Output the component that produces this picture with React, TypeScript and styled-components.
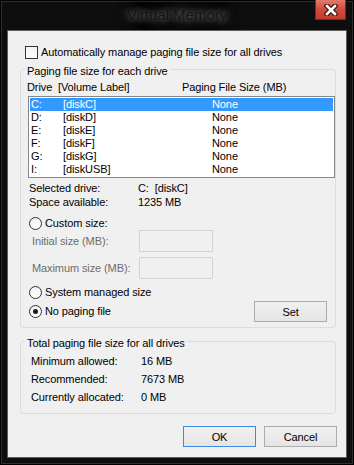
import * as React from 'react';
import styled, { createGlobalStyle } from 'styled-components';

const GlobalStyle = createGlobalStyle`
  html, body {
    margin: 0;
    padding: 0;
    background: #000;
  }
  * {
    box-sizing: border-box;
  }
`;

const FONT = `"Liberation Sans", Arial, sans-serif`;

const Window = styled.div`
  width: 354px;
  height: 465px;
  background: #0e0e0e;
  box-shadow: inset 0 0 0 1px #000, inset 0 0 0 2px #2e2e2e;
  display: flex;
  flex-direction: column;
  font-family: ${FONT};
  font-size: 11px;
  letter-spacing: -0.1px;
  color: #000;
  white-space: nowrap;
`;

const TitleBar = styled.div`
  height: 30px;
  display: grid;
  grid-template-columns: 1fr auto 1fr;
  align-items: start;
`;

const Title = styled.div`
  grid-column: 2;
  padding: 6px 4px 0;
  font-size: 15px;
  letter-spacing: 0;
  line-height: 18px;
  color: #141414;
  text-shadow: 0 0 4px #5a5a5a, 0 0 8px #4a4a4a, 0 0 12px #3a3a3a, 0 0 16px #2e2e2e;
`;

const CloseButton = styled.div`
  grid-column: 3;
  justify-self: end;
  margin-right: 8px;
  width: 31px;
  height: 20px;
  border: 1px solid #7a2a22;
  border-top: none;
  background: linear-gradient(#e07a6e, #cf4b3d 50%, #c43b2e);
  display: flex;
  align-items: center;
  justify-content: center;
`;

const Client = styled.div`
  flex: 1;
  margin: 0 7px 7px;
  border: 1px solid #5c5c5c;
  background: #f0f0f0;
  display: flex;
  flex-direction: column;
`;

const CheckRow = styled.div`
  margin: 15px 0 0 17px;
  height: 13px;
  display: flex;
  align-items: center;
  gap: 3px;
  line-height: 13px;
`;

const CheckBox = styled.span`
  width: 13px;
  height: 13px;
  border: 1px solid #333;
  background: linear-gradient(#f4f4f4, #fcfcfc);
`;

const Group = styled.div<{ $top: number; $bottom: number }>`
  margin: ${({ $top }) => $top}px 10px 0 12px;
  padding-bottom: ${({ $bottom }) => $bottom}px;
  border: 1px solid #dcdcdc;
  border-radius: 3px;
  display: flex;
  flex-direction: column;
`;

const Legend = styled.div`
  margin: -6px 0 0 4px;
  padding: 0 2px;
  width: fit-content;
  line-height: 14px;
  background: #f0f0f0;
`;

const Header = styled.div`
  margin: 2px 0 0 6px;
  line-height: 14px;
  display: grid;
  grid-template-columns: 31px 124px 1fr;
`;

const ListBox = styled.div`
  margin: 2px 0 0 7px;
  border: 1px solid #828790;
  background: #fff;
  padding: 1px;
`;

const ListRow = styled.div<{ $selected?: boolean }>`
  height: 13px;
  line-height: 13px;
  padding-left: 1px;
  display: grid;
  grid-template-columns: 32px 149px 1fr;
  background: ${({ $selected }) => ($selected ? '#3399ff' : 'transparent')};
  color: ${({ $selected }) => ($selected ? '#fff' : '#000')};
`;

const InfoBlock = styled.div<{ $top: number; $indent: number; $label: number; $line: number }>`
  margin: ${({ $top }) => $top}px 0 0 ${({ $indent }) => $indent}px;
  display: grid;
  grid-template-columns: ${({ $label }) => $label}px 1fr;
  line-height: ${({ $line }) => $line}px;
`;

const RadioRow = styled.div<{ $top: number }>`
  margin: ${({ $top }) => $top}px 0 0 8px;
  height: 13px;
  display: flex;
  align-items: center;
  gap: 3px;
  line-height: 13px;
`;

const Radio = styled.span<{ $checked?: boolean }>`
  width: 13px;
  height: 13px;
  border-radius: 50%;
  border: 1px solid #333;
  background: linear-gradient(#f2f2f2, #fdfdfd);
  display: flex;
  align-items: center;
  justify-content: center;
  &::after {
    content: '';
    display: ${({ $checked }) => ($checked ? 'block' : 'none')};
    width: 5px;
    height: 5px;
    border-radius: 50%;
    background: #1a1a1a;
  }
`;

const FieldRow = styled.div<{ $top: number }>`
  margin: ${({ $top }) => $top}px 0 0 11px;
  height: 22px;
  display: flex;
  align-items: center;
`;

const FieldLabel = styled.span`
  width: 107px;
  color: #6d6d6d;
  line-height: 14px;
`;

const TextBox = styled.div`
  width: 74px;
  height: 22px;
  border: 1px solid #d4d4d4;
  background: #f0f0f0;
`;

const ActionRow = styled.div`
  margin: 2px 8px 0 8px;
  height: 21px;
  display: flex;
  align-items: center;
  justify-content: space-between;
`;

const RadioInline = styled.div`
  display: flex;
  align-items: center;
  gap: 3px;
  line-height: 13px;
`;

const Button = styled.div<{ $default?: boolean }>`
  width: 73px;
  height: 21px;
  border: 1px solid ${({ $default }) => ($default ? '#3c8ae6' : '#acacac')};
  background: linear-gradient(#f0f0f0, #e5e5e5);
  display: flex;
  align-items: center;
  justify-content: center;
  line-height: 14px;
`;

const ButtonBar = styled.div`
  margin: 12px 9px 0 0;
  display: flex;
  justify-content: flex-end;
  gap: 8px;
`;

const drives = [
  { drive: 'C:', label: '[diskC]', size: 'None' },
  { drive: 'D:', label: '[diskD]', size: 'None' },
  { drive: 'E:', label: '[diskE]', size: 'None' },
  { drive: 'F:', label: '[diskF]', size: 'None' },
  { drive: 'G:', label: '[diskG]', size: 'None' },
  { drive: 'I:', label: '[diskUSB]', size: 'None' },
];

const totals = [
  ['Minimum allowed:', '16 MB'],
  ['Recommended:', '7673 MB'],
  ['Currently allocated:', '0 MB'],
];

const CloseGlyph = () => (
  <svg width="14" height="12" viewBox="0 0 14 12">
    <path d="M3 2 L11 10 M11 2 L3 10" stroke="#3b1510" strokeWidth="5" strokeLinecap="square" />
    <path d="M3 2 L11 10 M11 2 L3 10" stroke="#fff" strokeWidth="2.6" strokeLinecap="square" />
  </svg>
);

const App: React.FunctionComponent = () => {
  const [selected] = React.useState(0);

  return (
    <>
      <GlobalStyle />
      <Window>
        <TitleBar>
          <Title>Virtual Memory</Title>
          <CloseButton>
            <CloseGlyph />
          </CloseButton>
        </TitleBar>

        <Client>
          <CheckRow>
            <CheckBox />
            <span>Automatically manage paging file size for all drives</span>
          </CheckRow>

          <Group $top={10} $bottom={5}>
            <Legend>Paging file size for each drive</Legend>
            <Header>
              <span>Drive</span>
              <span>[Volume Label]</span>
              <span>Paging File Size (MB)</span>
            </Header>
            <ListBox>
              {drives.map((d, i) => (
                <ListRow key={d.drive} $selected={i === selected}>
                  <span>{d.drive}</span>
                  <span>{d.label}</span>
                  <span>{d.size}</span>
                </ListRow>
              ))}
            </ListBox>

            <InfoBlock $top={3} $indent={8} $label={109} $line={14}>
              <span>Selected drive:</span>
              <span>C:&nbsp; [diskC]</span>
              <span>Space available:</span>
              <span>1235 MB</span>
            </InfoBlock>

            <RadioRow $top={8}>
              <Radio />
              <span>Custom size:</span>
            </RadioRow>
            <FieldRow $top={0}>
              <FieldLabel>Initial size (MB):</FieldLabel>
              <TextBox />
            </FieldRow>
            <FieldRow $top={5}>
              <FieldLabel>Maximum size (MB):</FieldLabel>
              <TextBox />
            </FieldRow>

            <RadioRow $top={7}>
              <Radio />
              <span>System managed size</span>
            </RadioRow>
            <ActionRow>
              <RadioInline>
                <Radio $checked />
                <span>No paging file</span>
              </RadioInline>
              <Button>Set</Button>
            </ActionRow>
          </Group>

          <Group $top={13} $bottom={7}>
            <Legend>Total paging file size for all drives</Legend>
            <InfoBlock $top={2} $indent={10} $label={110} $line={18}>
              {totals.map(([label, value]) => (
                <React.Fragment key={label}>
                  <span>{label}</span>
                  <span>{value}</span>
                </React.Fragment>
              ))}
            </InfoBlock>
          </Group>

          <ButtonBar>
            <Button $default>OK</Button>
            <Button>Cancel</Button>
          </ButtonBar>
        </Client>
      </Window>
    </>
  );
};

export default App;
